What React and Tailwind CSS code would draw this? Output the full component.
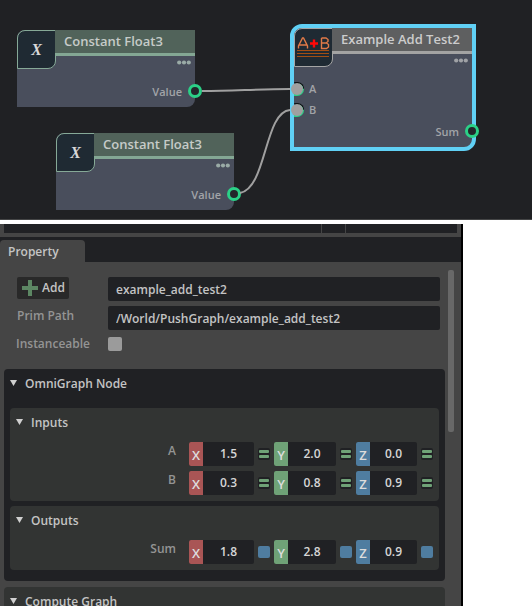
import React from "react";

function Port({ filled }) {
  return (
    <svg className="block size-[14px]" viewBox="0 0 14 14" aria-hidden="true">
      {filled ? (
        <>
          <path d="M4 0H8A6.500 6.500 0 0 1 14 7H7Z" fill="#101417" />
          <path d="M14 7A7 7 0 0 1 7 14H4V7Z" fill="#2bd087" />
          <path d="M9.500 2A6 6 0 0 1 13 7" fill="none" stroke="#2bd087" />
          <circle cx="7" cy="7" r="6" fill="#a0a0a0" />
        </>
      ) : (
        <circle cx="7" cy="7" r="5.500" fill="#23272b" stroke="#2bd087" strokeWidth="3" />
      )}
    </svg>
  );
}

function Dots({ className }) {
  return (
    <svg className={"block h-[5px] w-[14px] " + className} viewBox="0 0 14 5" fill="currentColor" aria-hidden="true">
      <circle cx="2.200" cy="2.500" r="2.100" />
      <circle cx="7" cy="2.500" r="2.100" />
      <circle cx="11.800" cy="2.500" r="2.100" />
    </svg>
  );
}

function ConstantNode({ place }) {
  return (
    <article className={"absolute h-[77px] w-[178px] rounded-br-lg rounded-tl-lg bg-[#494e5c] " + place}>
      <div className="flex items-start">
        <div className="-mr-px flex size-[39px] shrink-0 items-center justify-center rounded-tl-lg rounded-br-lg border border-[#86a997] bg-[#1f2a33] font-['Liberation_Serif',serif] text-base leading-5 font-bold text-[#d8d8d8] italic">
          <span aria-hidden="true">X</span>
        </div>
        <h2 className="h-[26px] flex-1 border-b-3 border-[#84a794] bg-[#51635a] pl-[9px] text-[13px] leading-[23px] font-semibold text-[#c6cbc8]">
          Constant Float3
        </h2>
      </div>
      <Dots className="absolute top-[30px] right-1 text-[#9aaba6]" />
      <span className="absolute right-[13px] bottom-[7px] text-[11px] leading-4 font-semibold text-[#a2a4a8]">Value</span>
      <div className="absolute -right-[7px] bottom-[9px]"><Port /></div>
    </article>
  );
}

function AddIcon() {
  return (
    <svg className="block size-[37px]" viewBox="0 0 37 37" fill="none" aria-hidden="true">
      <path d="M3.500 19.500V17L7.500 9h1l4 8v2.500M4.500 16h7" stroke="#e07a48" strokeWidth="1.400" />
      <path d="M26.500 9v10.500h5l2-1.500v-2.500l-2-1.500h-5M26.500 9h4.500l2 1.500v2l-2 1.500" stroke="#e07a48" strokeWidth="1.400" />
      <path d="M15 14.500h8M19 10.500v8" stroke="#ff0808" strokeWidth="2.400" />
      <path d="M2 21.500h32M2 24.500h32M2 27.500h32" stroke="#a34e14" />
    </svg>
  );
}

function AddNode() {
  return (
    <article className="absolute top-6 left-[290px] h-[127px] w-[186px] rounded-tl-xl rounded-br-xl border-4 border-[#60d0f5] bg-[#494e5c]">
      <div className="flex items-start">
        <div className="-mr-px size-[39px] shrink-0 rounded-tl-lg rounded-br-lg border border-[#a5a5a5] bg-[#1f2a33]">
          <AddIcon />
        </div>
        <h2 className="h-[26px] flex-1 border-b-3 border-[#a3a3a3] bg-[#5e5f60] pl-[9px] text-[13px] leading-[23px] font-semibold whitespace-nowrap text-[#cccccc]">
          Example Add Test2
        </h2>
      </div>
      <Dots className="absolute top-[30px] right-1 text-[#a0a2a6]" />
      <div className="absolute top-[54px] -left-1 flex items-center gap-1 text-[11px] leading-[14px] font-semibold text-[#a2a4a8]"><Port filled /><span className="pl-px">A</span></div>
      <div className="absolute top-[75px] -left-1 flex items-center gap-1 text-[11px] leading-[14px] font-semibold text-[#a2a4a8]"><Port filled /><span className="pl-px">B</span></div>
      <span className="absolute right-[13px] bottom-[7px] text-[11px] leading-4 font-semibold text-[#a2a4a8]">Sum</span>
      <div className="absolute -right-[7px] bottom-[9px]"><Port /></div>
    </article>
  );
}

function Triangle() {
  return (
    <svg className="block h-[6px] w-[7px]" viewBox="0 0 7 6" aria-hidden="true">
      <path d="M0 0h7L3.500 6Z" fill="#d0d0d0" />
    </svg>
  );
}

function SectionHeader({ children, className }) {
  return (
    <button type="button" aria-expanded="true" className={"flex h-7 w-full items-center gap-2 text-left " + className}>
      <Triangle />
      <span className="pt-[2px] leading-5">{children}</span>
    </button>
  );
}

const axes = [
  { name: "X", color: "bg-[#a95555]" },
  { name: "Y", color: "bg-[#6fa277]" },
  { name: "Z", color: "bg-[#4f7da0]" },
];

function VectorRow({ label, values, output }) {
  return (
    <div role="group" aria-label={label} className="flex">
      <span className="w-[166px] shrink-0 text-right leading-[18px] text-[#949494]">{label}</span>
      <div className="ml-[13px] grid flex-1 grid-cols-[81fr_78fr_77fr] gap-1">
        {axes.map((axis, i) => (
          <div key={axis.name} className="flex items-center justify-between">
            <label className="mr-1 flex h-6 min-w-0 flex-1 overflow-hidden rounded-xs bg-[#202124]">
              <span className={"w-[14px] shrink-0 text-center text-[13px] leading-[26px] text-[#dddddd] " + axis.color}>{axis.name}</span>
              <input
                defaultValue={values[i]}
                readOnly={output}
                aria-label={label + " " + axis.name}
                className="w-full min-w-0 bg-transparent text-center leading-6 text-[#d6d6d6] outline-none"
              />
            </label>
            {output ? (
              <span className="size-3 rounded-xs bg-[#4f7da0]" />
            ) : (
              <button type="button" aria-label={label + " " + axis.name + " default"} className="flex size-3 flex-col justify-center gap-[2px] rounded-xs bg-[#202124] px-px">
                <span className="h-[3px] w-full rounded-[1px] bg-[#6fa277]" />
                <span className="h-[3px] w-full rounded-[1px] bg-[#6fa277]" />
              </button>
            )}
          </div>
        ))}
      </div>
    </div>
  );
}

function Graph() {
  return (
    <section className="relative h-[220px] shrink-0 overflow-hidden border-b border-[#444546] bg-[#202124]">
      <ConstantNode place="top-[30px] left-[17px]" />
      <ConstantNode place="top-[133px] left-14" />
      <AddNode />
      <svg className="absolute top-0 left-0 h-[220px] w-[532px]" viewBox="0 0 532 220" fill="none" stroke="#a0a0a0" strokeWidth="2" aria-hidden="true">
        <path d="M202 91C235 91 255 89 290 89" />
        <path d="M240 193C267 188 264 112 290 110" />
      </svg>
    </section>
  );
}

function PropertyPanel() {
  return (
    <section className="mt-1 mr-[69px] flex min-h-0 flex-1 flex-col overflow-hidden border-r-2 border-black bg-[#454545] text-xs font-semibold text-[#c4c4c4]">
      <div className="mr-1 mb-1 ml-1 flex h-[9px] shrink-0 gap-px">
        <div className="flex-1 bg-[#202124]" />
        <div className="w-[23px] bg-[#202124]" />
        <div className="w-[111px] bg-[#202124]" />
      </div>
      <div role="tablist" className="flex h-[25px] shrink-0 items-end bg-[#202124]">
        <button type="button" role="tab" aria-selected="true" className="h-[22px] w-[85px] rounded-t-sm bg-[#454545] pl-2 text-left leading-6">
          Property
        </button>
      </div>
      <div className="flex pt-2 pr-[7px] pl-1">
        <div className="min-w-0 flex-1 pt-[7px]">
          <div className="grid grid-cols-[104px_1fr] gap-y-[5px] pr-[5px]">
            <div className="pl-[13px]">
              <button type="button" className="flex h-[22px] w-[52px] items-center gap-1 rounded-xs bg-[#292929] pl-[5px] leading-6">
                <svg className="size-4 shrink-0" viewBox="0 0 16 16" aria-hidden="true">
                  <path d="M6 0h4v6h6v4h-6v6H6v-6H0V6h6Z" fill="#5c8763" />
                </svg>
                Add
              </button>
            </div>
            <input aria-label="Prim name" defaultValue="example_add_test2" className="h-6 w-full min-w-0 rounded-xs bg-[#202124] px-2 outline-none" />
            <label htmlFor="prim-path" className="pl-[13px] leading-5 text-[#949494]">Prim Path</label>
            <input id="prim-path" defaultValue="/World/PushGraph/example_add_test2" className="h-6 w-full min-w-0 rounded-xs bg-[#202124] px-2 outline-none" />
            <label htmlFor="instanceable" className="pl-3 leading-[18px] text-[#949494]">Instanceable</label>
            <input id="instanceable" type="checkbox" className="mt-[2px] size-[14px] appearance-none rounded-xs bg-[#9b9b9b]" />
          </div>
          <div className="mt-4 rounded-sm bg-[#202124] px-[6px] pb-[11px]">
            <SectionHeader className="mb-[11px]">OmniGraph Node</SectionHeader>
            <div className="rounded-sm bg-[#323433] pr-[6px] pb-[6px]">
              <SectionHeader className="mb-[6px] pl-[6px]">Inputs</SectionHeader>
              <div className="flex flex-col gap-[5px]">
                <VectorRow label="A" values={["1.5", "2.0", "0.0"]} />
                <VectorRow label="B" values={["0.3", "0.8", "0.9"]} />
              </div>
            </div>
            <div className="mt-[5px] rounded-sm bg-[#323433] pr-[6px] pb-[6px]">
              <SectionHeader className="mb-[6px] pl-[6px]">Outputs</SectionHeader>
              <VectorRow label="Sum" values={["1.8", "2.8", "0.9"]} output />
            </div>
          </div>
          <div className="mt-[6px] h-12 rounded-sm bg-[#323433] px-[6px]">
            <SectionHeader>Compute Graph</SectionHeader>
          </div>
        </div>
        <div className="ml-[3px] h-[162px] w-[6px] shrink-0 rounded-xs bg-[#686868]" />
      </div>
    </section>
  );
}

export default function App() {
  return (
    <main className="flex h-screen flex-col overflow-hidden bg-white font-['Open_Sans',sans-serif]">
      <Graph />
      <PropertyPanel />
    </main>
  );
}
